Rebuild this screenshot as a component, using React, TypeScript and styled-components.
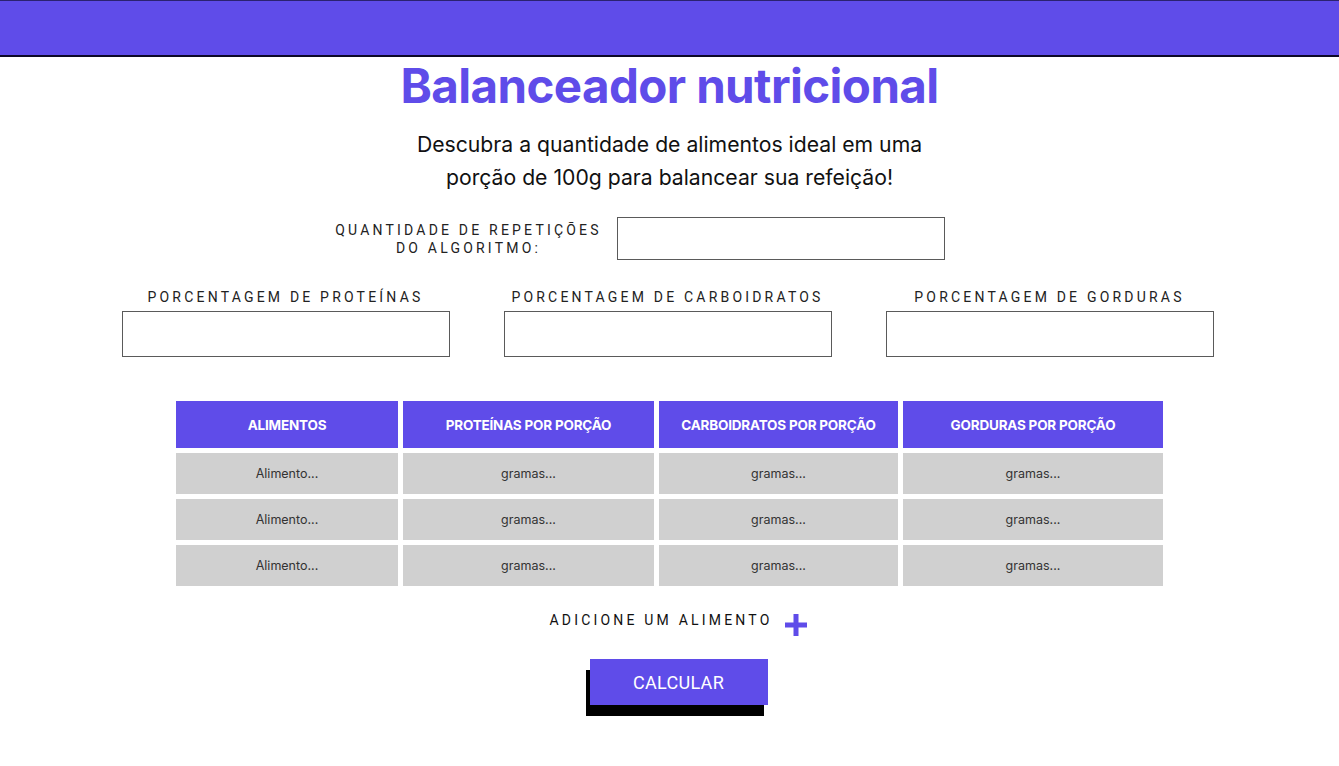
import React from "react";
import styled, { createGlobalStyle } from "styled-components";

const PURPLE = "#5f4ce9";

const Global = createGlobalStyle`
  html, body { margin: 0; padding: 0; background: #fff; }
  body { font-family: Inter, "Noto Sans", sans-serif; }
  * { box-sizing: border-box; }
`;

const TopBar = styled.header`
  height: 57px;
  background: ${PURPLE};
  border-top: 1px solid #2b2270;
  border-bottom: 2px solid #0d0928;
`;

const Main = styled.main`
  display: flex;
  flex-direction: column;
  align-items: center;
  min-height: calc(100vh - 57px);
  padding-bottom: 40px;
`;

const Title = styled.h1`
  margin: 1px 0 0;
  font-family: Inter, sans-serif;
  font-weight: 700;
  font-size: 47.5px;
  line-height: 56px;
  letter-spacing: -0.6px;
  color: ${PURPLE};
`;

const Subtitle = styled.p`
  margin: 14px 0 0;
  width: 540px;
  text-align: center;
  font-family: Inter, sans-serif;
  font-size: 21.2px;
  line-height: 33px;
  color: #111;
`;

const Label = styled.label<{ $width?: number }>`
  display: block;
  width: ${(p) => (p.$width ? `${p.$width}px` : "auto")};
  text-align: center;
  font-family: Roboto, "Liberation Sans", sans-serif;
  font-size: 14px;
  line-height: 18px;
  letter-spacing: 3.2px;
  color: #222;
  text-transform: uppercase;
`;

const Field = styled.input<{ $h: number }>`
  width: 328px;
  height: ${(p) => p.$h}px;
  border: 1px solid #5a5a5a;
  background: #fff;
  outline: none;
  padding: 0 8px;
  font-size: 14px;
`;

const RepRow = styled.div`
  display: flex;
  align-items: center;
  gap: 12px;
  margin-top: 23px;
  padding-right: 62px;
`;

const PctRow = styled.div`
  display: flex;
  gap: 54px;
  margin-top: 28px;
  padding-right: 4px;
`;

const PctGroup = styled.div`
  display: flex;
  flex-direction: column;
  align-items: center;
  gap: 5px;
`;

const Table = styled.div`
  display: grid;
  grid-template-columns: 222px 251px 239px 260px;
  grid-template-rows: 47px repeat(3, 41px);
  gap: 5px;
  margin-top: 44px;
`;

const HeadCell = styled.div`
  background: ${PURPLE};
  color: #fff;
  display: flex;
  align-items: center;
  justify-content: center;
  font-family: Inter, sans-serif;
  font-weight: 700;
  font-size: 13.5px;
  letter-spacing: -0.2px;
`;

const BodyCell = styled.div`
  background: #d0d0d0;
  color: #333;
  display: flex;
  align-items: center;
  justify-content: center;
  font-family: Inter, sans-serif;
  font-size: 12.5px;
`;

const AddRow = styled.div`
  display: flex;
  align-items: center;
  gap: 11px;
  margin-top: 16px;
  margin-left: 18px;
`;

const AddText = styled.span`
  font-family: Roboto, "Liberation Sans", sans-serif;
  font-size: 14px;
  letter-spacing: 3.2px;
  color: #111;
`;

const PlusIcon = styled.svg`
  width: 24px;
  height: 24px;
  margin-top: 11px;
`;

const Button = styled.button`
  margin-top: 22px;
  margin-left: 18px;
  width: 178px;
  height: 46px;
  border: none;
  background: ${PURPLE};
  color: #fff;
  font-family: Roboto, "Liberation Sans", sans-serif;
  font-size: 18px;
  letter-spacing: 0.3px;
  box-shadow: -4px 11px 0 #000;
  cursor: pointer;
`;

const headers = [
  "ALIMENTOS",
  "PROTEÍNAS POR PORÇÃO",
  "CARBOIDRATOS POR PORÇÃO",
  "GORDURAS POR PORÇÃO",
];

const pct = [
  "PORCENTAGEM DE PROTEÍNAS",
  "PORCENTAGEM DE CARBOIDRATOS",
  "PORCENTAGEM DE GORDURAS",
];

export default function App() {
  return (
    <>
      <Global />
      <TopBar />
      <Main>
        <Title>Balanceador nutricional</Title>
        <Subtitle>
          Descubra a quantidade de alimentos ideal em uma porção de 100g para
          balancear sua refeição!
        </Subtitle>
        <RepRow>
          <Label $width={272}>
            Quantidade de repetições
            <br />
            do algoritmo:
          </Label>
          <Field $h={43} />
        </RepRow>
        <PctRow>
          {pct.map((p) => (
            <PctGroup key={p}>
              <Label>{p}</Label>
              <Field $h={46} />
            </PctGroup>
          ))}
        </PctRow>
        <Table>
          {headers.map((h) => (
            <HeadCell key={h}>{h}</HeadCell>
          ))}
          {[0, 1, 2].map((r) => (
            <React.Fragment key={r}>
              <BodyCell>Alimento...</BodyCell>
              <BodyCell>gramas...</BodyCell>
              <BodyCell>gramas...</BodyCell>
              <BodyCell>gramas...</BodyCell>
            </React.Fragment>
          ))}
        </Table>
        <AddRow>
          <AddText>ADICIONE UM ALIMENTO</AddText>
          <PlusIcon viewBox="0 0 24 24">
            <path d="M12 1v22M1 12h22" stroke={PURPLE} strokeWidth="5" fill="none" />
          </PlusIcon>
        </AddRow>
        <Button>CALCULAR</Button>
      </Main>
    </>
  );
}
